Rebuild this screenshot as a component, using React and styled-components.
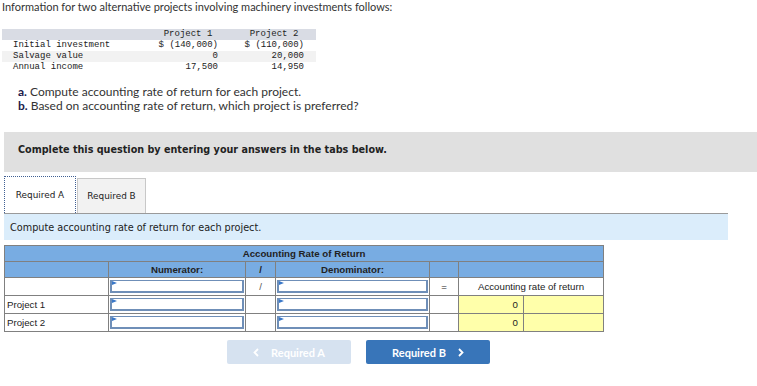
import styled, { createGlobalStyle } from 'styled-components';

const GlobalStyle = createGlobalStyle`
  body {
    margin: 0;
    background: #fff;
    font-family: Lato, 'Liberation Sans', sans-serif;
    color: #333;
  }
`;

const Page = styled.div`
  width: 757px;
  padding: 0 0 0 2px;
  box-sizing: border-box;
`;

const Intro = styled.p`
  margin: 0;
  font-size: 11px;
  line-height: 13px;
  color: #333;
`;

const DataGrid = styled.div`
  margin-top: 16px;
  width: 314px;
  display: grid;
  grid-template-columns: 154px 64px 22px 64px 10px;
  font-family: 'Liberation Mono', 'DejaVu Sans Mono', monospace;
  font-size: 9px;
  line-height: 11px;
  color: #222;
`;

const DataRow = styled.div`
  display: contents;
  & > span {
    background: ${(p) => (p.$head ? '#d9dce4' : p.$shade ? '#f2f2f2' : 'transparent')};
  }
`;

const Cell = styled.span`
  text-align: ${(p) => p.$align || 'left'};
  padding-left: ${(p) => (p.$label ? '11px' : '0')};
  padding-right: ${(p) => (p.$align === 'right' ? '2px' : '0')};
  white-space: pre;
`;

const Questions = styled.div`
  margin-top: 12px;
  padding-left: 16px;
  font-size: 12px;
  line-height: 14px;
  color: #333;
  b {
    color: #1a1a4a;
  }
`;

const Notice = styled.div`
  margin: 19px 0 0 2px;
  height: 40px;
  box-sizing: border-box;
  padding: 0 0 5px 14px;
  background: #e0e0e0;
  display: flex;
  align-items: center;
  font-family: 'DejaVu Sans', Verdana, sans-serif;
  font-weight: bold;
  font-size: 9.65px;
  color: #222;
`;

const Tabs = styled.div`
  margin: 4px 0 0 2px;
  display: flex;
  align-items: flex-end;
  gap: 1px;
`;

const Tab = styled.div`
  height: ${(p) => (p.$active ? '37px' : '35px')};
  width: ${(p) => (p.$active ? '72px' : '69px')};
  box-sizing: border-box;
  display: flex;
  align-items: center;
  justify-content: center;
  font-family: 'DejaVu Sans', Tahoma, sans-serif;
  font-size: 8.9px;
  color: #222;
  background: ${(p) => (p.$active ? '#fff' : '#f2f2f2')};
  border: ${(p) => (p.$active ? '1px dotted #3f5f93' : '1px solid #c8c8c8')};
  border-bottom: none;
`;

const Band = styled.div`
  margin-left: 2px;
  width: 724px;
  height: 27px;
  box-sizing: border-box;
  border-top: 1px solid #9a9a9a;
  background: #dbedfb;
  display: flex;
  align-items: center;
  padding-left: 6px;
  font-family: 'DejaVu Sans', Verdana, sans-serif;
  font-size: 9.7px;
  color: #222;
`;

const Grid = styled.table`
  margin: 5px 0 0 2px;
  border-collapse: collapse;
  table-layout: fixed;
  width: 599px;
  font-family: 'Liberation Sans', Arial, sans-serif;
  font-size: 9.7px;
  line-height: 11px;
  color: #222;
  td {
    border: 1px solid #808080;
    height: 15px;
    padding: 0;
  }
`;

const Head = styled.td`
  background: #78ace2;
  font-weight: bold;
  text-align: center;
`;

const Plain = styled.td`
  background: ${(p) => (p.$yellow ? '#ffffaa' : '#fff')};
  text-align: ${(p) => p.$align || 'center'};
  padding: ${(p) => (p.$align === 'left' ? '0 2px' : p.$align === 'right' ? '0 5px' : '0')} !important;
  color: ${(p) => (p.$muted ? '#555' : '#222')};
`;

const InputCell = styled.td`
  background: #fff;
  padding: 1px !important;
`;

const Field = styled.div`
  position: relative;
  height: 13px;
  box-sizing: border-box;
  border: 2px solid #6f8fb8;
  border-width: 1px 2px 2px 2px;
  background: #fff;
  &::before {
    content: '';
    position: absolute;
    top: 0;
    left: 0;
    border-left: 5px solid #3a78c9;
    border-top: 2.5px solid transparent;
    border-bottom: 2.5px solid transparent;
  }
`;

const Nav = styled.div`
  display: flex;
  gap: 15px;
  margin: 8px 0 0 225px;
`;

const NavButton = styled.div`
  width: 124px;
  height: 24px;
  border-radius: 2px;
  background: ${(p) => (p.$disabled ? '#d6e2f0' : '#3875b9')};
  color: #fff;
  font-family: Lato, 'Liberation Sans', sans-serif;
  font-weight: bold;
  font-size: 11px;
  display: flex;
  align-items: center;
  justify-content: center;
  gap: 12px;
  svg {
    display: block;
  }
`;

const Chevron = ({ dir }) => (
  <svg width="6" height="9" viewBox="0 0 6 9">
    <path
      d={dir === 'left' ? 'M5 1 L1.5 4.5 L5 8' : 'M1 1 L4.5 4.5 L1 8'}
      fill="none"
      stroke="#fff"
      strokeWidth="1.8"
    />
  </svg>
);

const data = [
  ['Initial investment', '$ (140,000)', '$ (110,000)'],
  ['Salvage value', '0', '20,000'],
  ['Annual income', '17,500', '14,950'],
];

export default function App() {
  return (
    <Page>
      <GlobalStyle />
      <Intro>Information for two alternative projects involving machinery investments follows:</Intro>

      <DataGrid>
        <DataRow $head>
          <Cell />
          <Cell $align="center">Project 1</Cell>
          <Cell />
          <Cell $align="center">Project 2</Cell>
          <Cell />
        </DataRow>
        {data.map((r, i) => (
          <DataRow key={r[0]} $shade={i === 1}>
            <Cell $label>{r[0]}</Cell>
            <Cell $align="right">{r[1]}</Cell>
            <Cell />
            <Cell $align="right">{r[2]}</Cell>
            <Cell />
          </DataRow>
        ))}
      </DataGrid>

      <Questions>
        <div><b>a.</b> Compute accounting rate of return for each project.</div>
        <div><b>b.</b> Based on accounting rate of return, which project is preferred?</div>
      </Questions>

      <Notice>Complete this question by entering your answers in the tabs below.</Notice>

      <Tabs>
        <Tab $active>Required A</Tab>
        <Tab>Required B</Tab>
      </Tabs>
      <Band>Compute accounting rate of return for each project.</Band>

      <Grid>
        <colgroup>
          <col style={{ width: 104 }} />
          <col style={{ width: 137 }} />
          <col style={{ width: 30 }} />
          <col style={{ width: 154 }} />
          <col style={{ width: 29 }} />
          <col style={{ width: 65 }} />
          <col style={{ width: 80 }} />
        </colgroup>
        <tbody>
          <tr>
            <Head colSpan={7}>Accounting Rate of Return</Head>
          </tr>
          <tr>
            <Head />
            <Head>Numerator:</Head>
            <Head>/</Head>
            <Head>Denominator:</Head>
            <Head />
            <Head colSpan={2} />
          </tr>
          <tr>
            <Plain />
            <InputCell><Field /></InputCell>
            <Plain $muted>/</Plain>
            <InputCell><Field /></InputCell>
            <Plain>=</Plain>
            <Plain colSpan={2}>Accounting rate of return</Plain>
          </tr>
          {['Project 1', 'Project 2'].map((p) => (
            <tr key={p}>
              <Plain $align="left">{p}</Plain>
              <InputCell><Field /></InputCell>
              <Plain />
              <InputCell><Field /></InputCell>
              <Plain />
              <Plain $yellow $align="right">0</Plain>
              <Plain $yellow />
            </tr>
          ))}
        </tbody>
      </Grid>

      <Nav>
        <NavButton $disabled>
          <Chevron dir="left" />
          Required A
        </NavButton>
        <NavButton>
          Required B
          <Chevron dir="right" />
        </NavButton>
      </Nav>
    </Page>
  );
}
